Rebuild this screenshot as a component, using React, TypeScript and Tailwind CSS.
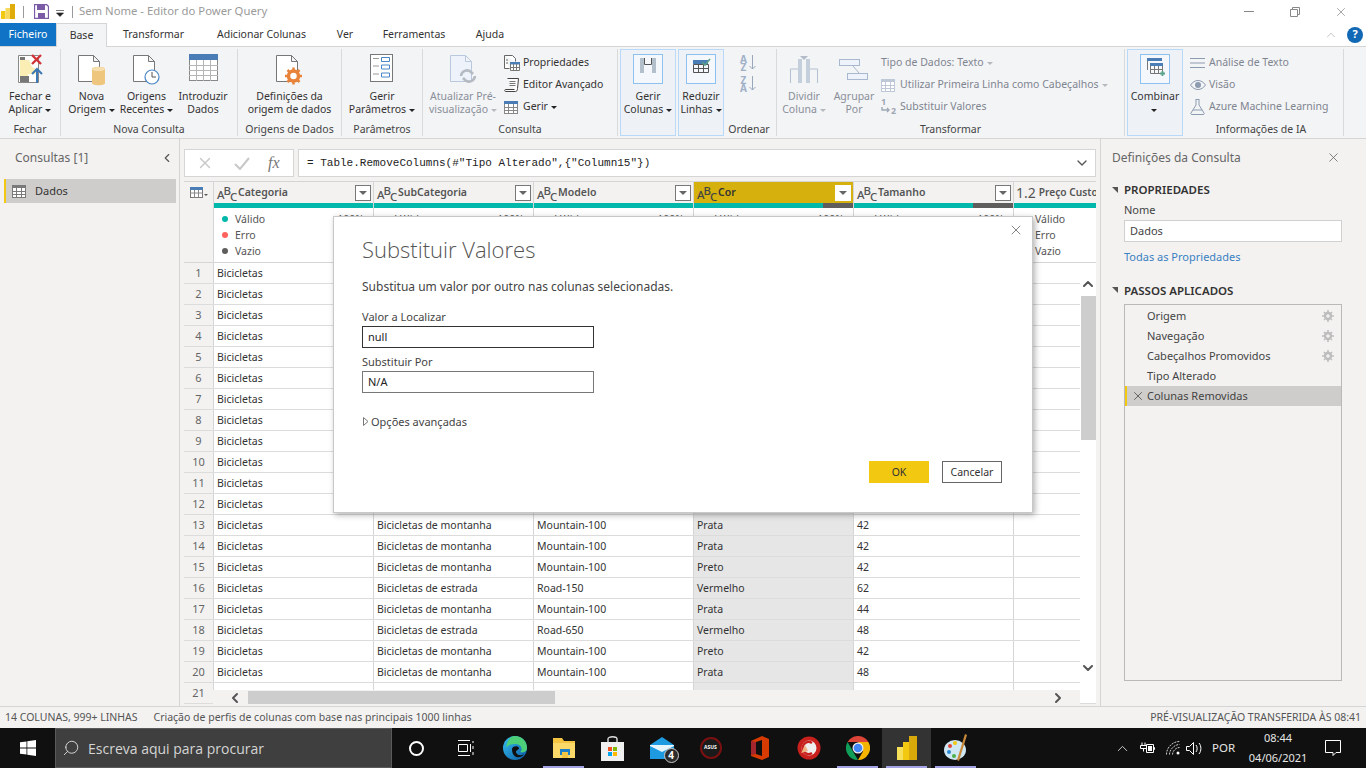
import { ReactNode } from 'react';
import clsx from 'clsx';
import { ChevronDown, ChevronLeft, ChevronRight, ChevronUp, Search, X } from 'lucide-react';

const rows = [
  ['Bicicletas de montanha', 'Mountain-100', 'Prata', '38'],
  ['Bicicletas de montanha', 'Mountain-100', 'Prata', '38'],
  ['Bicicletas de montanha', 'Mountain-100', 'Prata', '38'],
  ['Bicicletas de montanha', 'Mountain-100', 'Prata', '38'],
  ['Bicicletas de montanha', 'Mountain-100', 'Prata', '38'],
  ['Bicicletas de montanha', 'Mountain-100', 'Prata', '38'],
  ['Bicicletas de montanha', 'Mountain-100', 'Prata', '38'],
  ['Bicicletas de montanha', 'Mountain-100', 'Prata', '38'],
  ['Bicicletas de montanha', 'Mountain-100', 'Prata', '38'],
  ['Bicicletas de montanha', 'Mountain-100', 'Prata', '38'],
  ['Bicicletas de montanha', 'Mountain-100', 'Prata', '38'],
  ['Bicicletas de montanha', 'Mountain-100', 'Prata', '38'],
  ['Bicicletas de montanha', 'Mountain-100', 'Prata', '42'],
  ['Bicicletas de montanha', 'Mountain-100', 'Prata', '42'],
  ['Bicicletas de montanha', 'Mountain-100', 'Preto', '42'],
  ['Bicicletas de estrada', 'Road-150', 'Vermelho', '62'],
  ['Bicicletas de montanha', 'Mountain-100', 'Prata', '44'],
  ['Bicicletas de estrada', 'Road-650', 'Vermelho', '48'],
  ['Bicicletas de montanha', 'Mountain-100', 'Preto', '42'],
  ['Bicicletas de montanha', 'Mountain-100', 'Prata', '48'],
];

const columns = ['Categoria', 'SubCategoria', 'Modelo', 'Cor', 'Tamanho'];

function Caret({ dim }: { dim?: boolean }) {
  return (
    <span
      className={clsx(
        'ml-[3px] inline-block align-middle border-x-[3px] border-t-[3px] border-x-transparent',
        dim ? 'border-t-[#b5b8bd]' : 'border-t-[#222]',
      )}
    />
  );
}

function Doc({ stroke = '#777', fill = 'white' }: { stroke?: string; fill?: string }) {
  return <path d="M1.5 1.5h15l6 6v20h-21zM16.5 1.5v6h6" fill={fill} stroke={stroke} />;
}

function FecharIcon() {
  return (
    <svg width="27" height="32" viewBox="0 0 27 32">
      <path d="M1.5 1.5h20v27h-20z" fill="white" stroke="#888" />
      <path d="M3 6h9l3 7 6 3v4H11v4H3z" fill="#fbeeb4" />
      <rect x="3" y="3" width="5" height="3" fill="#777" />
      <rect x="3" y="22" width="9" height="6" fill="#777" />
      <path d="M15 1l9 9M24 1l-9 9" stroke="#d13438" strokeWidth="2.4" />
      <path d="M20 29V15M15 20l5-5 5 5" fill="none" stroke="#3c78b5" strokeWidth="2" />
    </svg>
  );
}

function NovaOrigemIcon() {
  return (
    <svg width="29" height="32" viewBox="0 0 29 32">
      <Doc />
      <path d="M15 15c0-3 13-3 13 0v14c0 3-13 3-13 0z" fill="#eec67e" />
      <ellipse cx="21.5" cy="15" rx="6.5" ry="2" fill="#f6e0b0" />
    </svg>
  );
}

function RecentesIcon() {
  return (
    <svg width="29" height="32" viewBox="0 0 29 32">
      <Doc />
      <circle cx="20" cy="23" r="7" fill="white" stroke="#4a86c5" strokeWidth="1.2" />
      <path d="M20 18v5h4" fill="none" stroke="#555" />
    </svg>
  );
}

function TableBigIcon() {
  return (
    <svg width="29" height="28" viewBox="0 0 29 28">
      <rect x="0.5" y="0.5" width="28" height="26" fill="white" stroke="#888" />
      <rect x="0" y="0" width="29" height="6" fill="#4a7db5" />
      <path d="M0 11.5h29M0 16.5h29M0 21.5h29M7.5 6v21M14.5 6v21M21.5 6v21" stroke="#b5b5b5" />
    </svg>
  );
}

function DefinicoesIcon() {
  return (
    <svg width="29" height="32" viewBox="0 0 29 32">
      <Doc />
      <circle cx="18.5" cy="22" r="5" fill="none" stroke="#e8833a" strokeWidth="3.5" />
      <path d="M18.5 13.5v17M10 22h17M12.5 16l12 12M24.5 16l-12 12" stroke="#e8833a" strokeWidth="2.5" strokeDasharray="3 11" />
    </svg>
  );
}

function ParametrosIcon() {
  return (
    <svg width="24" height="29" viewBox="0 0 24 29">
      <rect x="0.5" y="0.5" width="22" height="27" fill="white" stroke="#777" />
      <path d="M3 4.5h6M3 12h6M3 20h6" stroke="#999" />
      <path d="M11.5 3.5h8v4h-8zM11.5 11h8v4h-8zM11.5 19h8v4h-8z" fill="none" stroke="#4a86c5" />
    </svg>
  );
}

function AtualizarIcon() {
  return (
    <svg width="29" height="32" viewBox="0 0 29 32">
      <Doc stroke="#b9c8de" fill="#eef3fb" />
      <path d="M12 22a6 6 0 0 1 10-4l2 2M26 22a6 6 0 0 1-10 4l-2-2" fill="none" stroke="#b3bac2" strokeWidth="2.6" />
    </svg>
  );
}

function SmallTable({ c = '#888', head = '#4a7db5' }: { c?: string; head?: string }) {
  return (
    <svg width="14" height="13" viewBox="0 0 14 13">
      <rect x="0.5" y="0.5" width="13" height="12" fill="white" stroke={c} />
      <rect x="0" y="0" width="14" height="3" fill={head} />
      <path d="M0 6.5h14M0 9.5h14M4.5 3v10M9.5 3v10" stroke={c} />
    </svg>
  );
}

function PropriedadesIcon() {
  return (
    <svg width="16" height="16" viewBox="0 0 16 16">
      <path d="M0.5 0.5h8l3 3v3M0.5 0.5v13h5" fill="white" stroke="#666" />
      <path d="M2 5h2M2 8h2" stroke="#666" />
      <rect x="6" y="7" width="10" height="9" fill="white" />
      <rect x="6" y="7" width="10" height="2.5" fill="#4a7db5" />
      <path d="M6.5 9v6.500h9V9M6 12.500h10M9.500 9v7M12.500 9v7" fill="none" stroke="#777" />
    </svg>
  );
}

function EditorIcon() {
  return (
    <svg width="16" height="16" viewBox="0 0 16 16">
      <path d="M3.500 1.500h11l-1 10c0 2-1 3-2 3h-10c-1 0-1-2 0-2h9" fill="white" stroke="#444" />
      <path d="M5.500 4.500h6M5.500 6.500h6M5.500 8.500h6" stroke="#777" />
    </svg>
  );
}

function GerirColunasIcon() {
  return (
    <svg width="30" height="30" viewBox="0 0 30 30">
      <rect x="0.5" y="0.500" width="29" height="29" fill="#f4f8fc" stroke="#8cc1f0" />
      <rect x="7" y="4" width="4" height="15" fill="#b4bfcc" />
      <rect x="19" y="4" width="4" height="15" fill="#b4bfcc" />
      <path d="M11.500 4v6.500h7V4" fill="none" stroke="#555" />
    </svg>
  );
}

function ReduzirIcon() {
  return (
    <svg width="30" height="30" viewBox="0 0 30 30">
      <rect x="0.500" y="0.500" width="29" height="29" fill="#f4f8fc" stroke="#8cc1f0" />
      <rect x="7" y="6" width="15" height="4" fill="#4a7db5" />
      <path d="M7.500 10.500h15v8h-15zM7.500 14.500h15M12.500 10.500v8M17.500 10.500v8" fill="none" stroke="#555" />
      <path d="M16 8l3 3 5-6" fill="none" stroke="#58a18a" strokeWidth="1.6" />
    </svg>
  );
}

function SortIcon({ top, bottom }: { top: string; bottom: string }) {
  return (
    <div className="flex items-center h-[18px] text-[#9fb0c8] font-bold text-[10px] leading-[8px]">
      <div className="flex flex-col w-[9px] items-center">
        <span>{top}</span>
        <span>{bottom}</span>
      </div>
      <svg width="7" height="16" viewBox="0 0 7 16" className="ml-[1px]">
        <path d="M3.500 0v14M0.500 11l3 3 3-3" fill="none" stroke="#9aa7bb" />
      </svg>
    </div>
  );
}

function DividirIcon() {
  return (
    <svg width="28" height="30" viewBox="0 0 28 30">
      <path d="M0.500 29V15h8M27.500 29V15h-8" fill="none" stroke="#b3c0d2" />
      <rect x="8" y="5" width="4" height="24" fill="#c4cfdc" />
      <rect x="16" y="5" width="4" height="24" fill="#c4cfdc" />
      <path d="M10 2h8l-4 4z" fill="#b3bcc8" />
    </svg>
  );
}

function AgruparIcon() {
  return (
    <svg width="30" height="22" viewBox="0 0 30 22">
      <rect x="0.500" y="0.500" width="20" height="6" fill="#eef3fb" stroke="#a8b8cf" />
      <rect x="8.500" y="14.500" width="20" height="6" fill="#eef3fb" stroke="#a8b8cf" />
      <path d="M14 7l6 7" stroke="#a8b8cf" />
    </svg>
  );
}

function ReplaceIcon() {
  return (
    <div className="relative h-[16px] w-[16px] text-[9px] leading-[9px] font-bold text-[#9fa8b5]">
      <span className="absolute left-0 top-[-2px]">1</span>
      <span className="absolute left-[10px] top-[7px]">2</span>
      <svg width="10" height="7" viewBox="0 0 10 7" className="absolute left-0 top-[8px]">
        <path d="M1 0v3h7M6 1l2 2-2 2" fill="none" stroke="#9fa8b5" strokeWidth="1.400" />
      </svg>
    </div>
  );
}

function CombinarIcon() {
  return (
    <svg width="30" height="30" viewBox="0 0 30 30">
      <rect x="0.500" y="0.500" width="29" height="29" fill="#f4f8fc" stroke="#8cc1f0" />
      <rect x="7" y="4" width="15" height="3" fill="#4a7db5" />
      <path d="M7.500 7v9" stroke="#777" />
      <rect x="10" y="9" width="13" height="3" fill="#4a7db5" />
      <path d="M10.500 12v7.500h12V12M10.500 15.500h12M14.500 12v7.500M18.500 12v7.500" fill="none" stroke="#777" />
      <path d="M20 19.500h5M22.500 17v5" stroke="#58a18a" strokeWidth="1.800" />
    </svg>
  );
}

function RibbonGroup({ label, className, children }: { label?: string; className: string; children: ReactNode }) {
  return (
    <div className={clsx('flex flex-col border-r border-[#d9dadc] shrink-0', className)}>
      <div className="flex flex-1 min-h-0">{children}</div>
      <div className="h-[13px] leading-[13px] mb-[0px] text-center text-[#444] text-[10.500px] whitespace-nowrap">{label}</div>
    </div>
  );
}

function BigButton({
  icon,
  lines,
  caret,
  dim,
  className,
}: {
  icon: ReactNode;
  lines: string[];
  caret?: boolean;
  dim?: boolean;
  className: string;
}) {
  return (
    <div className={clsx('flex flex-col items-center pt-[5px] shrink-0', className)}>
      <div className="h-[32px] flex items-start justify-center">{icon}</div>
      <div className={clsx('mt-[4px] text-center leading-[13px] text-[10.500px] whitespace-nowrap', dim ? 'text-[#8a8f99]' : 'text-[#333]')}>
        <div>{lines[0]}</div>
        <div>
          {lines[1]}
          {caret && <Caret dim={dim} />}
        </div>
      </div>
    </div>
  );
}

function BoxedButton({ icon, lines, className }: { icon: ReactNode; lines: string[]; className: string }) {
  return (
    <div className={clsx('flex flex-col items-center pt-[4px] border border-[#b8d9f7] bg-[#eef2f6] shrink-0', className)}>
      {icon}
      <div className="mt-[6px] text-center leading-[13px] text-[10.500px] text-[#333] whitespace-nowrap">
        <div>{lines[0]}</div>
        <div>
          {lines[1]}
          <Caret />
        </div>
      </div>
    </div>
  );
}

function SmallButton({ icon, label, caret, dim, gap = 'w-[19px]' }: { icon?: ReactNode; label: string; caret?: boolean; dim?: boolean; gap?: string }) {
  return (
    <div className={clsx('flex items-center h-[22px] text-[10.500px] whitespace-nowrap', dim ? 'text-[#7f8590]' : 'text-[#333]')}>
      {icon && <div className={clsx('flex items-center shrink-0', gap)}>{icon}</div>}
      <span>{label}</span>
      {caret && <Caret dim={dim} />}
    </div>
  );
}

function Ribbon() {
  return (
    <div className="flex h-[92px] shrink-0 py-[2px] bg-[#f3f4f6] border-b border-[#d5d5d5]">
      <RibbonGroup label="Fechar" className="w-[61px]">
        <BigButton className="w-[60px]" icon={<FecharIcon />} lines={['Fechar e', 'Aplicar']} caret />
      </RibbonGroup>
      <RibbonGroup label="Nova Consulta" className="w-[177px]">
        <BigButton className="w-[55px] ml-[3px]" icon={<NovaOrigemIcon />} lines={['Nova', 'Origem']} caret />
        <BigButton className="w-[55px]" icon={<RecentesIcon />} lines={['Origens', 'Recentes']} caret />
        <BigButton className="w-[58px]" icon={<TableBigIcon />} lines={['Introduzir', 'Dados']} />
      </RibbonGroup>
      <RibbonGroup label="Origens de Dados" className="w-[104px]">
        <BigButton className="w-[103px]" icon={<DefinicoesIcon />} lines={['Definições da', 'origem de dados']} />
      </RibbonGroup>
      <RibbonGroup label="Parâmetros" className="w-[81px]">
        <BigButton className="w-[80px]" icon={<ParametrosIcon />} lines={['Gerir', 'Parâmetros']} caret />
      </RibbonGroup>
      <RibbonGroup label="Consulta" className="w-[195px]">
        <BigButton className="w-[80px]" icon={<AtualizarIcon />} lines={['Atualizar Pré-', 'visualização']} caret dim />
        <div className="pt-[3px] pl-[1px]">
          <SmallButton icon={<PropriedadesIcon />} label="Propriedades" />
          <SmallButton icon={<EditorIcon />} label="Editor Avançado" />
          <SmallButton icon={<SmallTable />} label="Gerir" caret />
        </div>
      </RibbonGroup>
      <div className="flex shrink-0 w-[159px] border-r border-[#d9dadc] pl-[2px]">
        <BoxedButton className="w-[56px]" icon={<GerirColunasIcon />} lines={['Gerir', 'Colunas']} />
        <BoxedButton className="w-[46px] ml-[2px]" icon={<ReduzirIcon />} lines={['Reduzir', 'Linhas']} />
        <div className="flex flex-col flex-1 items-center pr-[2px]">
          <div className="flex-1 flex flex-col items-center pt-[5px] pr-[3px] gap-[3px]">
            <SortIcon top="A" bottom="Z" />
            <SortIcon top="Z" bottom="A" />
          </div>
          <div className="h-[13px] leading-[13px] text-[10.500px] text-[#444]">Ordenar</div>
        </div>
      </div>
      <RibbonGroup label="Transformar" className="w-[348px]">
        <BigButton className="w-[50px] ml-[2px]" icon={<DividirIcon />} lines={['Dividir', 'Coluna']} caret dim />
        <BigButton className="w-[50px]" icon={<div className="pt-[5px]"><AgruparIcon /></div>} lines={['Agrupar', 'Por']} dim />
        <div className="pt-[3px] ml-[2px]">
          <SmallButton label="Tipo de Dados: Texto" caret dim />
          <SmallButton icon={<SmallTable c="#bfc8d6" head="#bfc8d6" />} label="Utilizar Primeira Linha como Cabeçalhos" caret dim />
          <SmallButton icon={<ReplaceIcon />} label="Substituir Valores" dim />
        </div>
      </RibbonGroup>
      <div className="flex shrink-0 w-[219px] border-r border-[#d9dadc] pl-[2px]">
        <div className="flex flex-col items-center pt-[4px] w-[56px] border border-[#b8d9f7] bg-[#eef2f6]">
          <CombinarIcon />
          <div className="mt-[6px] text-center leading-[13px] text-[10.500px] text-[#333]">
            <div>Combinar</div>
            <div className="-ml-[4px]">
              <Caret />
            </div>
          </div>
        </div>
        <div className="flex flex-col flex-1 pl-[7px]">
          <div className="flex-1 pt-[3px]">
            <SmallButton
              icon={
                <svg width="15" height="12" viewBox="0 0 15 12">
                  <path d="M0 1.500h15M0 6h15M0 10.500h15" stroke="#8d9bb0" />
                </svg>
              }
              label="Análise de Texto"
              dim
            />
            <SmallButton
              icon={
                <svg width="16" height="10" viewBox="0 0 16 10">
                  <path d="M0.500 5c4-6 11-6 15 0-4 6-11 6-15 0z" fill="none" stroke="#8d9bb0" />
                  <circle cx="8" cy="5" r="3" fill="#8d9bb0" />
                </svg>
              }
              label="Visão"
              dim
            />
            <SmallButton
              icon={
                <svg width="15" height="16" viewBox="0 0 15 16">
                  <path d="M5.500 0.500h4M6 1v5L1 14c-.5 1 0 1.500 1 1.500h11c1 0 1.500-.5 1-1.500L9 6V1M3 11h9" fill="none" stroke="#8d9bb0" />
                </svg>
              }
              label="Azure Machine Learning"
              dim
            />
          </div>
          <div className="h-[13px] leading-[13px] text-center text-[10.500px] text-[#444] pr-[11px]">Informações de IA</div>
        </div>
      </div>
    </div>
  );
}

function TitleBar() {
  return (
    <div className="flex items-center h-[23px] shrink-0 bg-white">
      <svg width="14" height="15" viewBox="0 0 14 15" className="ml-[1px]">
        <rect x="0" y="7" width="4.500" height="8" fill="#f2c811" />
        <rect x="4.500" y="4" width="4.500" height="11" fill="#f6d95a" />
        <rect x="9" y="0" width="5" height="15" fill="#e0ac0c" />
      </svg>
      <div className="ml-[8px] h-[12px] w-px bg-[#9a9a9a]" />
      <svg width="15" height="15" viewBox="0 0 15 15" className="ml-[10px]">
        <path d="M0.500 0.500h12l2 2v12H0.500z" fill="white" stroke="#7b5aa6" strokeWidth="1.300" />
        <rect x="3" y="1" width="8" height="5" fill="#7b5aa6" />
        <rect x="4" y="9" width="7" height="5" fill="#7b5aa6" />
      </svg>
      <svg width="8" height="7" viewBox="0 0 8 7" className="ml-[7px] mt-[3px]">
        <path d="M0 0.500h8M0.500 3h7l-3.500 3.500z" fill="#222" stroke="#222" strokeWidth="0.600" />
      </svg>
      <div className="ml-[8px] h-[12px] w-px bg-[#9a9a9a]" />
      <span className="ml-[6px] text-[11.300px] text-[#9a9a9a]">Sem Nome - Editor do Power Query</span>
      <div className="ml-auto flex items-center">
        <div className="w-[10px] h-px bg-[#888] mr-[36px]" />
        <svg width="10" height="10" viewBox="0 0 10 10" className="mr-[34px]">
          <path d="M0.500 2.500h7v7h-7zM2.500 2.500v-2h7v7h-2" fill="none" stroke="#888" />
        </svg>
        <X size={14} strokeWidth={1} className="text-[#666] mr-[18px]" />
      </div>
    </div>
  );
}

function Tabs() {
  const tabs = [
    ['Transformar', 'w-[93px]'],
    ['Adicionar Colunas', 'w-[123px]'],
    ['Ver', 'w-[44px]'],
    ['Ferramentas', 'w-[94px]'],
    ['Ajuda', 'w-[58px]'],
  ];
  return (
    <div className="flex h-[24px] shrink-0 bg-white border-b border-[#d5d5d5] text-[10.500px] text-[#333]">
      <div className="w-[56px] h-[23px] pt-[1px] flex items-center justify-center bg-[#1173c5] text-white">Ficheiro</div>
      <div className="w-[51px] h-[24px] pt-[1px] flex items-center justify-center bg-[#f3f4f6] border-x border-t border-[#d5d5d5]">Base</div>
      {tabs.map(([name, w]) => (
        <div key={name} className={clsx('flex items-center justify-center h-[23px] pt-[1px]', w)}>
          {name}
        </div>
      ))}
      <div className="ml-auto flex items-center">
        <ChevronUp size={14} strokeWidth={1.200} className="text-[#aaa] mr-[9px]" />
        <div className="w-[16px] h-[16px] mr-[3px] rounded-full bg-[#1168b5] text-white text-[11px] font-bold flex items-center justify-center">?</div>
      </div>
    </div>
  );
}

function QueriesPanel() {
  return (
    <div className="w-[180px] shrink-0 border-r border-[#d5d5d5] pl-[4px] pr-[3px]">
      <div className="flex items-center justify-between h-[36px] pt-[1px] pl-[11px] pr-[2px] text-[12px] text-[#666]">
        <span>Consultas [1]</span>
        <ChevronLeft size={14} strokeWidth={2} className="text-[#555]" />
      </div>
      <div className="mt-[4px] flex items-center h-[24px] bg-[#cfcdcb] border-l-[2px] border-[#f2c811] pl-[6px] text-[11px] text-[#333]">
        <SmallTable c="#7a7a7a" head="#7a7a7a" />
        <span className="ml-[9px]">Dados</span>
      </div>
    </div>
  );
}

function TypeAbc({ dark }: { dark?: boolean }) {
  return (
    <div className={clsx('flex w-[20px] shrink-0 text-[11.500px] tracking-[-1px] font-medium leading-none', dark ? 'text-[#444]' : 'text-[#555]')}>
      <span className="translate-y-[2px]">A</span>
      <span className="-translate-y-[2px]">B</span>
      <span className="translate-y-[4px]">C</span>
    </div>
  );
}

function FilterBox({ active }: { active?: boolean }) {
  return (
    <div className={clsx('ml-auto mr-[2px] w-[16px] h-[16px] border bg-white flex items-center justify-center', active ? 'border-white' : 'border-[#777]')}>
      <span className="border-x-[4px] border-t-[4px] border-x-transparent border-t-[#666]" />
    </div>
  );
}

function ProfileCell() {
  return (
    <div className="w-[160px] shrink-0 border-l border-[#d5d5d5] bg-white pl-[8px] pr-[9px] pt-[3px] text-[10.500px] text-[#555] leading-[16px]">
      {[
        ['bg-[#01b8aa]', 'Válido', '100%'],
        ['bg-[#fd625e]', 'Erro', '0%'],
        ['bg-[#605e5c]', 'Vazio', '0%'],
      ].map(([dot, name, pct]) => (
        <div key={name} className="flex items-center">
          <span className={clsx('w-[6px] h-[6px] rounded-full', dot)} />
          <span className="ml-[7px]">{name}</span>
          <span className="ml-auto">{pct}</span>
        </div>
      ))}
    </div>
  );
}

function DataTable() {
  return (
    <div className="relative mt-[4px] ml-[4px] w-[912px] flex-1 min-h-0 overflow-hidden border-t border-[#d5d5d5] bg-white">
      <div className="flex h-[21px] bg-[#f3f2f1]">
        <div className="w-[29px] shrink-0 flex items-center pl-[6px]">
          <svg width="18" height="11" viewBox="0 0 18 11">
            <rect x="0.500" y="0.500" width="12" height="10" fill="white" stroke="#777" />
            <rect x="0" y="0" width="13" height="3" fill="#4a7db5" />
            <path d="M0 6h13M4.500 3v8M8.500 3v8" stroke="#888" />
            <path d="M14 7h4l-2 2z" fill="#555" />
          </svg>
        </div>
        {columns.map((c) => (
          <div
            key={c}
            className={clsx(
              'w-[160px] shrink-0 flex items-center pl-[3px] border-l border-[#d5d5d5]',
              c === 'Cor' && 'bg-[#d6b10d]',
            )}
          >
            <TypeAbc dark={c === 'Cor'} />
            <span className={clsx('ml-[1px] text-[10.500px] font-semibold', c === 'Cor' ? 'text-[#333]' : 'text-[#555]')}>{c}</span>
            <FilterBox active={c === 'Cor'} />
          </div>
        ))}
        <div className="w-[83px] shrink-0 flex items-center pl-[2px] border-l border-[#d5d5d5] whitespace-nowrap">
          <span className="text-[14px] text-[#555] leading-none">1.2</span>
          <span className="ml-[3px] text-[10.200px] font-semibold text-[#555]">Preço Custo</span>
        </div>
      </div>
      <div className="flex h-[5px] bg-white">
        <div className="w-[29px] shrink-0 bg-[#f3f2f1]" />
        {columns.map((c) => (
          <div key={c} className="w-[160px] shrink-0 flex border-l border-[#d5d5d5] bg-[#01b8aa]">
            {(c === 'Cor' || c === 'Tamanho') && <div className={clsx('ml-auto bg-[#605e5c]', c === 'Cor' ? 'w-[30px]' : 'w-[40px]')} />}
          </div>
        ))}
        <div className="w-[83px] shrink-0 border-l border-[#d5d5d5] bg-[#01b8aa]" />
      </div>
      <div className="flex h-[55px] border-b border-[#d5d5d5]">
        <div className="w-[29px] shrink-0 bg-[#f3f2f1]" />
        {columns.map((c) => (
          <ProfileCell key={c} />
        ))}
        <ProfileCell />
      </div>
      {rows.concat([['', '', '', '']]).map((r, i) => (
        <div key={i} className="flex h-[21px] border-b border-[#dcdcdc] text-[10.500px] text-[#333] leading-[20px] whitespace-nowrap">
          <div className="w-[29px] shrink-0 bg-[#f3f2f1] text-center text-[#666] text-[11px]">{i + 1}</div>
          <div className="w-[160px] shrink-0 border-l border-[#d5d5d5] pl-[3px]">{r[0] && 'Bicicletas'}</div>
          <div className="w-[160px] shrink-0 border-l border-[#d5d5d5] pl-[3px]">{r[0]}</div>
          <div className="w-[160px] shrink-0 border-l border-[#d5d5d5] pl-[3px]">{r[1]}</div>
          <div className="w-[160px] shrink-0 border-l border-[#d5d5d5] pl-[3px] bg-[#e6e6e6]">{r[2]}</div>
          <div className="w-[160px] shrink-0 border-l border-[#d5d5d5] pl-[3px]">{r[3]}</div>
          <div className="w-[83px] shrink-0 border-l border-[#d5d5d5]" />
        </div>
      ))}
      {/* scrollbars sit on top of the grid */}
      <div className="absolute left-[896px] top-[81px] w-[16px] h-[421px] bg-white flex flex-col items-center">
        <ChevronUp size={16} strokeWidth={3} className="mt-[13px] text-[#555]" />
        <div className="w-[15px] h-[144px] mt-[4px] bg-[#cdcdcd]" />
        <ChevronDown size={16} strokeWidth={3} className="mt-auto mb-[8px] text-[#555]" />
      </div>
      <div className="absolute left-[29px] top-[508px] right-[16px] h-[16px] bg-[#f3f2f1] flex items-center">
        <ChevronLeft size={16} strokeWidth={3} className="ml-[14px] text-[#555]" />
        <div className="ml-[5px] w-[307px] h-[15px] bg-[#cdcdcd]" />
        <ChevronRight size={16} strokeWidth={3} className="ml-auto mr-[14px] text-[#555]" />
      </div>
    </div>
  );
}

function SectionTitle({ children }: { children: ReactNode }) {
  return (
    <div className="flex items-center text-[11.500px] font-semibold text-[#333]">
      <span className="w-0 h-0 border-l-[6px] border-t-[6px] border-l-transparent border-t-[#555] ml-[11px] mr-[6px]" />
      <span>{children}</span>
    </div>
  );
}

function SettingsPanel() {
  const steps = ['Origem', 'Navegação', 'Cabeçalhos Promovidos', 'Tipo Alterado'];
  return (
    <div className="w-[266px] shrink-0 ml-auto border-l border-[#d5d5d5] pr-[24px] text-[11px] text-[#444]">
      <div className="flex items-center justify-between h-[36px] pt-[1px] pl-[11px] pr-[1px] text-[12px] text-[#666]">
        <span>Definições da Consulta</span>
        <X size={15} strokeWidth={1.300} className="text-[#666]" />
      </div>
      <div className="mt-[6px]">
        <SectionTitle>PROPRIEDADES</SectionTitle>
      </div>
      <div className="ml-[23px] mt-[4px] leading-[15px]">Nome</div>
      <div className="ml-[23px] mt-[3px] h-[22px] border border-[#d0d0d0] bg-white pl-[5px] leading-[20px]">Dados</div>
      <div className="ml-[23px] mt-[7px] text-[#3a7fc1]">Todas as Propriedades</div>
      <div className="mt-[16px]">
        <SectionTitle>PASSOS APLICADOS</SectionTitle>
      </div>
      <div className="ml-[23px] mt-[5px] h-[377px] border border-[#b9b9b9] pt-[1px]">
        {steps.map((s, i) => (
          <div key={s} className="flex items-center h-[20px] pl-[22px] pr-[7px]">
            <span>{s}</span>
            {i < 3 && (
              <svg width="12" height="12" viewBox="0 0 12 12" className="ml-auto">
                <circle cx="6" cy="6" r="3" fill="none" stroke="#bdbdbd" strokeWidth="2.400" />
                <path d="M6 0v12M0 6h12M2 2l8 8M10 2l-8 8" stroke="#bdbdbd" strokeWidth="1.600" strokeDasharray="2 8" />
              </svg>
            )}
          </div>
        ))}
        <div className="flex items-center h-[20px] bg-[#cfcdcb] border-l-[2px] border-[#f2c811]">
          <X size={14} strokeWidth={1.500} className="ml-[4px] mr-[2px] text-[#555]" />
          <span>Colunas Removidas</span>
        </div>
      </div>
    </div>
  );
}

function ReplaceDialog() {
  return (
    <div className="absolute left-[333px] top-[216px] w-[700px] h-[297px] bg-white border border-[#c8c8c8] shadow-[2px_2px_6px_rgba(0,0,0,0.3)] pl-[28px] text-[#444]">
      <X size={16} strokeWidth={1.100} className="absolute right-[8px] top-[5px] text-[#555]" />
      <div className="mt-[17px] font-['Open_Sans',sans-serif] font-light text-[22px] leading-[30px] text-[#555]">Substituir Valores</div>
      <div className="mt-[15px] text-[12px] leading-[16px]">Substitua um valor por outro nas colunas selecionadas.</div>
      <div className="mt-[14px] text-[11px] leading-[15px]">Valor a Localizar</div>
      <div className="mt-[2px] w-[232px] h-[22px] border border-[#333] pl-[5px] text-[11px] leading-[20px] text-[#222]">null</div>
      <div className="mt-[6px] text-[11px] leading-[15px]">Substituir Por</div>
      <div className="mt-[2px] w-[232px] h-[22px] border border-[#777] pl-[5px] text-[11px] leading-[20px] text-[#222]">N/A</div>
      <div className="mt-[21px] flex items-center text-[11px] leading-[15px]">
        <svg width="6" height="9" viewBox="0 0 6 9" className="ml-[1px] mr-[2px]">
          <path d="M0.500 0.500l4.500 4-4.500 4z" fill="none" stroke="#777" />
        </svg>
        <span>Opções avançadas</span>
      </div>
      <div className="absolute right-[30px] bottom-[29px] flex gap-[13px] text-[10.500px]">
        <div className="w-[60px] h-[22px] pt-[1px] bg-[#f2c811] flex items-center justify-center text-[#333]">OK</div>
        <div className="w-[60px] h-[22px] pt-[1px] bg-white border border-[#666] flex items-center justify-center text-[#333]">Cancelar</div>
      </div>
    </div>
  );
}

function TaskCell({ children, on, active }: { children?: ReactNode; on?: boolean; active?: boolean }) {
  return (
    <div className={clsx('relative w-[49px] h-[40px] flex items-center justify-center shrink-0', active && 'bg-[#333333]')}>
      {children}
      {on && <div className="absolute bottom-0 inset-x-[4px] h-[2px] bg-[#a3a3e6]" />}
    </div>
  );
}

function Taskbar() {
  return (
    <div className="flex h-[40px] shrink-0 bg-[#101010] text-white">
      <div className="w-[55px] flex items-center justify-center">
        <svg width="16" height="16" viewBox="0 0 16 16" fill="white">
          <path d="M0 2.300l6.500-.9v6.200H0zM7.300 1.300L16 0v7.600H7.300zM0 8.400h6.500v6.200L0 13.700zM7.300 8.400H16V16l-8.700-1.200z" />
        </svg>
      </div>
      <div className="w-[337px] flex items-center bg-[#3f3f3f] border border-[#5a5a5a] pl-[6px] text-[14px] text-[#d4d4d4]">
        <Search size={18} strokeWidth={1.200} className="-scale-x-100 text-[#e0e0e0]" />
        <span className="ml-[8px] font-['Open_Sans',sans-serif]">Escreva aqui para procurar</span>
      </div>
      <TaskCell>
        <div className="w-[15px] h-[15px] rounded-full border-[2.500px] border-white" />
      </TaskCell>
      <TaskCell>
        <svg width="16" height="16" viewBox="0 0 16 16" fill="none" stroke="white">
          <path d="M0 .5h12M0 15.500h12M.5 4.500h9v7h-9zM12.500 4v8M15 1v2M15 6v3M15 12v3" />
        </svg>
      </TaskCell>
      <TaskCell>
        <svg width="24" height="24" viewBox="0 0 24 24">
          <defs>
            <linearGradient id="edge" x1="0" y1="0" x2="1" y2="1">
              <stop offset="0" stopColor="#35c1f1" />
              <stop offset="1" stopColor="#0c59a4" />
            </linearGradient>
          </defs>
          <circle cx="12" cy="12" r="12" fill="url(#edge)" />
          <path d="M12 0c7 0 12 5 12 12 0 4-4 5-7 4 3-2 2-8-5-8S3 12 3 12C4 5 7 0 12 0z" fill="#4dcf7a" />
          <path d="M9 13c0-3 6-4 7-1 0 2-3 2-3 4s4 5 8 2c-3 5-12 5-12-5z" fill="#101010" />
        </svg>
      </TaskCell>
      <TaskCell on>
        <svg width="22" height="20" viewBox="0 0 22 20">
          <path d="M0 0h9l2 3h11v17H0z" fill="#f5c542" />
          <rect x="0" y="5" width="22" height="15" fill="#fbd968" />
          <rect x="7" y="11" width="10" height="6" fill="#1f7fc4" />
          <rect x="9" y="14" width="6" height="6" fill="#f5c542" />
        </svg>
      </TaskCell>
      <TaskCell>
        <svg width="23" height="25" viewBox="0 0 23 25">
          <path d="M7 6V3c0-3 9-3 9 0v3" fill="none" stroke="#ddd" strokeWidth="1.400" />
          <rect x="0" y="6" width="23" height="19" fill="#f0f0f0" />
          <rect x="7" y="11" width="4" height="4" fill="#f25022" />
          <rect x="12" y="11" width="4" height="4" fill="#7fba00" />
          <rect x="7" y="16" width="4" height="4" fill="#00a4ef" />
          <rect x="12" y="16" width="4" height="4" fill="#ffb900" />
        </svg>
      </TaskCell>
      <TaskCell>
        <div className="relative">
          <svg width="24" height="22" viewBox="0 0 24 22">
            <path d="M0 8l12-8 12 8v14H0z" fill="#1d9ae0" />
            <path d="M0 8h24v1L12 15 0 9z" fill="#e6f5fd" />
          </svg>
          <div className="absolute -right-[5px] -bottom-[4px] w-[15px] h-[15px] rounded-full bg-[#2c2c2c] border border-[#ccc] flex items-center justify-center text-[10px] font-bold">4</div>
        </div>
      </TaskCell>
      <TaskCell>
        <div className="w-[22px] h-[22px] rounded-full bg-[#1a1a1a] border-2 border-[#7a1010] flex items-center justify-center text-[5px] font-bold text-white">ASUS</div>
      </TaskCell>
      <TaskCell>
        <svg width="18" height="24" viewBox="0 0 18 24">
          <path d="M0 5l11-5 7 3v18l-7 3-11-4z" fill="#d83b01" />
          <path d="M5 6l6-2v16l-6-2z" fill="#101010" />
          <path d="M0 5l5 1v12l-5 1z" fill="#a4262c" />
        </svg>
      </TaskCell>
      <TaskCell>
        <svg width="24" height="24" viewBox="0 0 24 24">
          <circle cx="12" cy="12" r="11.500" fill="#c8201c" />
          <circle cx="12" cy="12" r="7.500" fill="#eee" />
          <path d="M15 7a6 6 0 1 0 0 10" fill="none" stroke="#c8201c" strokeWidth="2.500" />
          <path d="M4 17l4-8 3 6z" fill="#f0b080" />
        </svg>
      </TaskCell>
      <TaskCell on>
        <svg width="24" height="24" viewBox="0 0 24 24">
          <path d="M1.600 6A12 12 0 0 1 22.400 6H12z" fill="#db4437" />
          <path d="M12 24A12 12 0 0 1 1.600 6l6 10.400z" fill="#0f9d58" />
          <path d="M22.400 6A12 12 0 0 1 12 24l5-8.600L12 6z" fill="#f4b400" />
          <circle cx="12" cy="12" r="5.500" fill="#eee" />
          <circle cx="12" cy="12" r="4.300" fill="#4285f4" />
        </svg>
      </TaskCell>
      <TaskCell on active>
        <svg width="20" height="24" viewBox="0 0 20 24">
          <rect x="0" y="11" width="8" height="13" fill="#f6e05a" />
          <rect x="6" y="6" width="8" height="18" fill="#f2c811" />
          <rect x="12" y="0" width="8" height="24" fill="#d9a90c" />
        </svg>
      </TaskCell>
      <TaskCell on>
        <svg width="24" height="30" viewBox="0 0 24 30">
          <ellipse cx="11" cy="17" rx="11" ry="10" fill="#cfe6f3" />
          <circle cx="6" cy="13" r="2" fill="#e0473a" />
          <circle cx="11" cy="10" r="2" fill="#f2c811" />
          <circle cx="5" cy="19" r="2" fill="#2a8ad4" />
          <circle cx="10" cy="23" r="2" fill="#4db04a" />
          <path d="M21 1l2 1-8 26-2-1z" fill="#c98a3c" />
        </svg>
      </TaskCell>
      <div className="flex-1 flex items-center text-[#e6e6e6] text-[12px]">
        <ChevronUp size={17} strokeWidth={1.200} className="ml-[134px]" />
        <svg width="16" height="13" viewBox="0 0 16 13" className="ml-[8px]" fill="none" stroke="white">
          <path d="M3 .5v3M6 .5v3M1.500 3.500h6v3h-6zM4.500 6.500v3M7.500 2.500h7v8h-7zM14.500 5.500h1v2h-1" />
          <rect x="9" y="4" width="4" height="5" fill="white" stroke="none" />
        </svg>
        <svg width="14" height="14" viewBox="0 0 14 14" className="ml-[11px]" fill="none" stroke="#cfcfcf">
          <path d="M.5 13.500c0-7 6-13 13-13M3.500 13.500c0-5 5-10 10-10M6.500 13.500c0-3 3-7 7-7" strokeDasharray="2 1" />
          <circle cx="12" cy="12" r="1.500" fill="white" stroke="none" />
        </svg>
        <svg width="16" height="15" viewBox="0 0 16 15" className="ml-[6px]" fill="none" stroke="white">
          <path d="M.5 5.500h3l4-4v12l-4-4h-3zM10 4c1.500 2 1.500 5 0 7M13 2c2.500 3 2.500 8 0 11" />
        </svg>
        <span className="ml-[10px] text-[11.500px]">POR</span>
        <div className="ml-[13px] w-[60px] text-center text-[11px] leading-[20px]">
          <div>08:44</div>
          <div>04/06/2021</div>
        </div>
        <svg width="16" height="16" viewBox="0 0 16 16" className="ml-[17px]" fill="none" stroke="white">
          <path d="M.5.500h15v12h-4.500l-3 3v-3h-7.500z" />
        </svg>
      </div>
    </div>
  );
}

export default function App() {
  return (
    <div className="relative flex flex-col w-[1366px] h-[768px] overflow-hidden bg-[#f3f2f1] font-['Noto_Sans',sans-serif]">
      <TitleBar />
      <Tabs />
      <Ribbon />
      <div className="flex flex-1 min-h-0">
        <QueriesPanel />
        <div className="flex flex-col w-[920px] shrink-0 pt-[10px] pb-[2px]">
          <div className="flex h-[28px] ml-[4px] w-[912px] shrink-0">
            <div className="w-[110px] border border-[#d5d5d5] bg-white flex items-center text-[#c8c8c8]">
              <X size={18} strokeWidth={1.800} className="ml-[11px]" />
              <svg width="16" height="13" viewBox="0 0 16 13" className="ml-[20px]" fill="none" stroke="#c8c8c8" strokeWidth="2">
                <path d="M1 7l5 5L15 1" />
              </svg>
              <span className="ml-[18px] font-['Liberation_Serif',serif] italic text-[16px] text-[#777]">fx</span>
            </div>
            <div className="ml-[4px] flex-1 flex items-center justify-between border border-[#d5d5d5] bg-white pl-[8px] pr-[5px] font-['Liberation_Mono',monospace] text-[11px] text-[#222]">
              <span>= Table.RemoveColumns(#"Tipo Alterado",{'{'}"Column15"{'}'})</span>
              <ChevronDown size={16} strokeWidth={2} className="text-[#555]" />
            </div>
          </div>
          <DataTable />
        </div>
        <SettingsPanel />
      </div>
      <div className="flex items-center justify-between h-[22px] shrink-0 border-t border-[#d5d5d5] px-[5px] text-[10.500px] text-[#555]">
        <div>
          <span>14 COLUNAS, 999+ LINHAS</span>
          <span className="ml-[16px]">Criação de perfis de colunas com base nas principais 1000 linhas</span>
        </div>
        <span>PRÉ-VISUALIZAÇÃO TRANSFERIDA ÀS 08:41</span>
      </div>
      <Taskbar />
      <ReplaceDialog />
    </div>
  );
}
